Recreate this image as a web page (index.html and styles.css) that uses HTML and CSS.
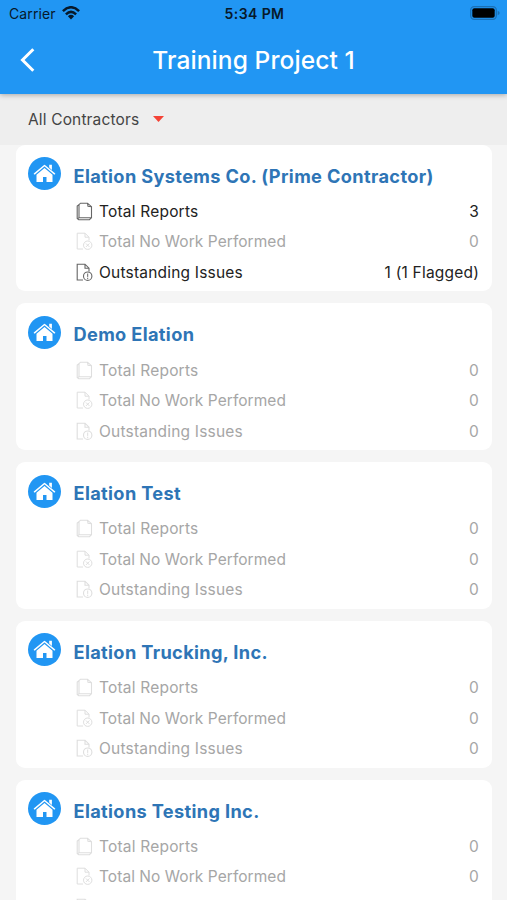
FILE: index.html
```html
<!DOCTYPE html>
<html lang="en">
<head>
<meta charset="utf-8">
<title>Training Project 1</title>
<link rel="stylesheet" href="styles.css">
</head>
<body>
<svg class="sprite" aria-hidden="true">
  <symbol id="home" viewBox="0 0 33 33">
    <circle cx="16.5" cy="16.5" r="16.5" fill="#2196f3"/>
    <path d="M6.500 16.800 16.500 8.500 26.500 16.800" fill="none" stroke="#fff" stroke-width="1.500" stroke-linecap="round" stroke-linejoin="round"/>
    <path d="M21.200 7.700h2.700v5.200l-2.700-2.300zM16.500 11.100l8 6.600v7.300h-6v-5h-3.500v5H8.500v-7.300z" fill="#fff"/>
  </symbol>
  <symbol id="reports" viewBox="0 0 17 19">
    <path d="M4.500 1.200H11.500L15.500 4.700V15.700H3V2.700zM11.500 1.200 12 4.200 15.500 4.700M3 2.700 1.200 4V16.500L2.700 17.700H13.500L15.500 15.700M3 15.700 1.700 16.900" fill="none" stroke="currentColor" stroke-width="1.100"/>
  </symbol>
  <symbol id="nowork" viewBox="0 0 17 19">
    <path d="M7 17H1.200V1.200H9L13 5.200V8.500M9 1.200V5.200H13" fill="none" stroke="currentColor"/>
    <circle cx="11.700" cy="13.200" r="4.200" fill="none" stroke="currentColor"/>
    <path d="M10 11.500 13.400 14.900M13.400 11.500 10 14.900" stroke="currentColor"/>
  </symbol>
  <symbol id="issues" viewBox="0 0 17 19">
    <path d="M7 17H1.200V1.200H9L13 5.200V8.500M9 1.200V5.200H13" fill="none" stroke="currentColor" stroke-width="1.100"/>
    <circle cx="11.700" cy="13.200" r="4.200" fill="none" stroke="currentColor" stroke-width="1.100"/>
    <path d="M11.700 10.500V13.900M11.700 14.700V16" stroke="currentColor"/>
  </symbol>
</svg>

<header class="appbar">
  <div class="status">
    <div class="carrier"><span>Carrier</span>
      <svg width="18" height="14" viewBox="0 0 18 14"><g fill="none" stroke="#07192a" stroke-width="2.500"><path d="M.9 5.100Q9-2.600 17.100 5.100"/><path d="M3.900 8.300Q9 3.500 14.100 8.300"/></g><path d="M5.900 10.200Q9 7.500 12.100 10.200L9 13.500z" fill="#07192a"/></svg>
    </div>
    <div class="time">5:34 PM</div>
    <svg class="battery" width="30" height="14" viewBox="0 0 30 14"><rect x=".7" y=".7" width="25.600" height="12.600" rx="3.500" fill="none" stroke="#1a70b6" stroke-width="1.300"/><rect x="2.300" y="2.300" width="22.400" height="9.400" rx="2" fill="#000"/><path d="M27.700 4.800q2 .7 2 2.200t-2 2.200z" fill="#1a70b6"/></svg>
  </div>
  <div class="nav">
    <svg class="back" width="16" height="26" viewBox="0 0 16 26"><path d="M13.300 2.300 2.500 13 13.300 23.700" fill="none" stroke="#fff" stroke-width="3"/></svg>
    <h1>Training Project 1</h1>
  </div>
</header>

<div class="filter"><span>All Contractors</span><svg width="11" height="6" viewBox="0 0 11 6"><path d="M0 0h11L5.500 6z" fill="#f44336"/></svg></div>

<main class="list">
  <section class="card">
    <svg class="home"><use href="#home"/></svg>
    <div class="body">
      <h2>Elation Systems Co. (Prime Contractor)</h2>
      <div class="row active"><svg><use href="#reports"/></svg><span>Total Reports</span><b>3</b></div>
      <div class="row"><svg><use href="#nowork"/></svg><span class="tight">Total No Work Performed</span><b>0</b></div>
      <div class="row active"><svg><use href="#issues"/></svg><span>Outstanding Issues</span><b>1 (1 Flagged)</b></div>
    </div>
  </section>
  <section class="card">
    <svg class="home"><use href="#home"/></svg>
    <div class="body">
      <h2>Demo Elation</h2>
      <div class="row"><svg><use href="#reports"/></svg><span>Total Reports</span><b>0</b></div>
      <div class="row"><svg><use href="#nowork"/></svg><span class="tight">Total No Work Performed</span><b>0</b></div>
      <div class="row"><svg><use href="#issues"/></svg><span>Outstanding Issues</span><b>0</b></div>
    </div>
  </section>
  <section class="card">
    <svg class="home"><use href="#home"/></svg>
    <div class="body">
      <h2>Elation Test</h2>
      <div class="row"><svg><use href="#reports"/></svg><span>Total Reports</span><b>0</b></div>
      <div class="row"><svg><use href="#nowork"/></svg><span class="tight">Total No Work Performed</span><b>0</b></div>
      <div class="row"><svg><use href="#issues"/></svg><span>Outstanding Issues</span><b>0</b></div>
    </div>
  </section>
  <section class="card">
    <svg class="home"><use href="#home"/></svg>
    <div class="body">
      <h2>Elation Trucking, Inc.</h2>
      <div class="row"><svg><use href="#reports"/></svg><span>Total Reports</span><b>0</b></div>
      <div class="row"><svg><use href="#nowork"/></svg><span class="tight">Total No Work Performed</span><b>0</b></div>
      <div class="row"><svg><use href="#issues"/></svg><span>Outstanding Issues</span><b>0</b></div>
    </div>
  </section>
  <section class="card">
    <svg class="home"><use href="#home"/></svg>
    <div class="body">
      <h2>Elations Testing Inc.</h2>
      <div class="row"><svg><use href="#reports"/></svg><span>Total Reports</span><b>0</b></div>
      <div class="row"><svg><use href="#nowork"/></svg><span class="tight">Total No Work Performed</span><b>0</b></div>
      <div class="row"><svg><use href="#issues"/></svg></div>
    </div>
  </section>
</main>
</body>
</html>
```

FILE: styles.css
```css
* { box-sizing: border-box; }
body {
  margin: 0;
  height: 900px;
  overflow: hidden;
  display: flex;
  flex-direction: column;
  background: #f5f5f5;
  font-family: Inter, "Liberation Sans", sans-serif;
}
svg { display: block; flex: none; }
.sprite { position: absolute; width: 0; height: 0; }

.appbar {
  position: relative;
  flex: none;
  height: 94px;
  background: #2196f3;
  box-shadow: 0 1px 5px rgba(0, 0, 0, .3);
}
.status {
  display: grid;
  grid-template-columns: 1fr auto 1fr;
  align-items: center;
  height: 27px;
  padding: 0 7px 0 9px;
  color: #07192a;
}
.carrier { display: flex; align-items: center; gap: 6px; font-size: 14px; letter-spacing: .1px; }
.carrier svg { margin-top: -1px; }
.time { font-size: 14px; font-weight: 600; letter-spacing: .4px; }
.battery { justify-self: end; margin-top: -1px; }
.nav {
  display: grid;
  grid-template-columns: 48px 1fr 48px;
  align-items: center;
  height: 65px;
}
.back { margin-left: 20px; }
h1 {
  margin: 0;
  text-align: center;
  color: #fff;
  font-size: 24.500px;
  font-weight: 500;
  letter-spacing: .1px;
}

.filter {
  flex: none;
  display: flex;
  align-items: center;
  gap: 14px;
  height: 50.500px;
  padding-left: 28px;
  background: #eee;
  color: #444;
  font-size: 15.500px;
  letter-spacing: .15px;
}

.list { display: flex; flex-direction: column; gap: 12px; padding: 0 15px 0 16px; }
.card {
  flex: none;
  display: flex;
  gap: 12.500px;
  height: 146.800px;
  padding: 12.500px 13px 0 12px;
  border-radius: 9px;
  background: #fff;
}
.home { width: 33px; height: 33px; }
.body { flex: 1; padding-top: 3.700px; }
h2 {
  margin: 0 0 5.300px;
  color: #2e75b6;
  font-size: 18.200px;
  font-weight: 650;
  line-height: 30px;
  letter-spacing: .35px;
  white-space: nowrap;
}
.row {
  display: flex;
  align-items: center;
  height: 30.500px;
  padding-left: 2px;
  color: #a6a6a6;
  font-size: 15.500px;
  letter-spacing: .2px;
}
.row svg { width: 17px; height: 19px; margin-right: 6.500px; color: #dedede; }
.row b { margin-left: auto; font-weight: 400; }
.row .tight { letter-spacing: .05px; }
.row.active { color: #222; }
.row.active svg { color: #666; }
```
